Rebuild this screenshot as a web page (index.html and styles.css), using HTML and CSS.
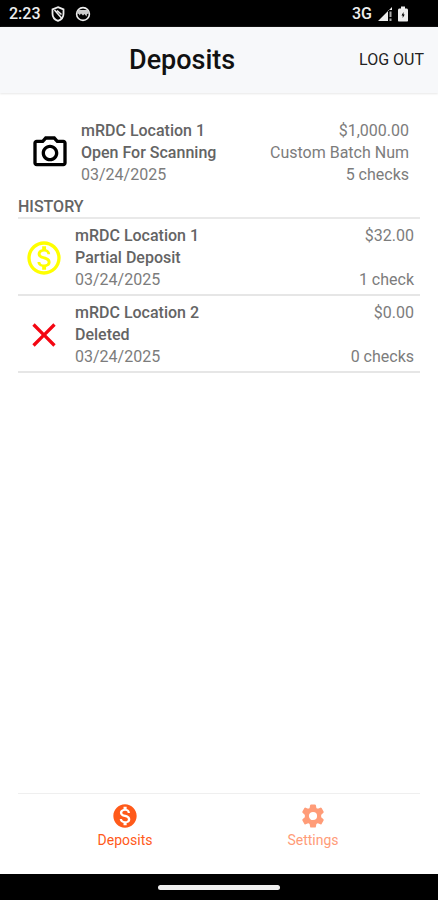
FILE: index.html
```html
<!DOCTYPE html>
<html lang="en">
<head>
<meta charset="utf-8">
<meta name="viewport" content="width=device-width, initial-scale=1">
<title>Deposits</title>
<link rel="stylesheet" href="styles.css">
</head>
<body>
<div class="status">
  <div class="status-group">
    <span class="status-text">2:23</span>
    <svg class="status-icon" viewBox="0 0 16 16" aria-hidden="true"><path d="M8 1.2 13.500 3.300v4.400c0 3.400-2.100 5.900-5.500 7.200-3.400-1.300-5.500-3.800-5.500-7.200V3.300z" fill="none" stroke="#eee" stroke-width="1.800"/><path d="M4.500 4 11.500 12M7 4.500l4.500 4" stroke="#eee" stroke-width="1.600"/></svg>
    <svg class="status-icon" viewBox="0 0 16 16" aria-hidden="true"><circle cx="8" cy="8" r="6.400" fill="none" stroke="#eee" stroke-width="1.600"/><path d="M3 4h10l1 3.500-2 .5-.5 2.500L9.500 8 8 9.500 6 7.500 4.500 9.500 4 8 2 7.500z" fill="#ccc"/></svg>
  </div>
  <div class="status-group status-right">
    <span class="status-text">3G</span>
    <svg class="status-icon" viewBox="0 0 16 16" aria-hidden="true"><path d="M1 15 15 1v3h-4v11z" fill="#eee"/><path d="M12.500 5.500h2V11h-2zM12.500 12.500h2V15h-2z" fill="#aaa"/></svg>
    <svg class="status-battery" viewBox="0 0 10 16" aria-hidden="true"><path d="M3 .5h4v2h1.500c.8 0 1.500.7 1.500 1.500v10.500c0 .6-.4 1-1 1H1c-.6 0-1-.4-1-1V4c0-.8.7-1.500 1.500-1.500H3z" fill="#eee"/><path d="M5.500 6 3.500 9.500h1.200V12l2-3.500H5.500z" fill="#000"/></svg>
  </div>
</div>

<header class="header">
  <h1 class="title">Deposits</h1>
  <button class="logout" type="button">LOG OUT</button>
</header>

<main class="content">
  <article class="item item-open">
    <svg class="item-icon" viewBox="0 0 24 24" fill="#000" aria-hidden="true"><path d="M14.120 4l1.830 2H20v12H4V6h4.050l1.830-2h4.240M15 2H9L7.170 4H4c-1.100 0-2 .9-2 2v12c0 1.100.9 2 2 2h16c1.100 0 2-.9 2-2V6c0-1.100-.9-2-2-2h-3.170L15 2zm-3 7c1.650 0 3 1.350 3 3s-1.350 3-3 3-3-1.350-3-3 1.350-3 3-3m0-2c-2.760 0-5 2.240-5 5s2.240 5 5 5 5-2.240 5-5-2.240-5-5-5z"/></svg>
    <div class="item-main">
      <div class="strong">mRDC Location 1</div>
      <div class="strong">Open For Scanning</div>
      <div>03/24/2025</div>
    </div>
    <div class="item-side">
      <div>$1,000.00</div>
      <div>Custom Batch Num</div>
      <div>5 checks</div>
    </div>
  </article>

  <h2 class="section">HISTORY</h2>

  <article class="item">
    <svg class="item-icon" viewBox="0 0 24 24" fill="#ff0" aria-hidden="true"><path d="M12 2C6.480 2 2 6.480 2 12s4.480 10 10 10 10-4.480 10-10S17.520 2 12 2zm0 18c-4.410 0-8-3.590-8-8s3.590-8 8-8 8 3.590 8 8-3.590 8-8 8zm.31-8.860c-1.770-.45-2.340-.94-2.340-1.670 0-.84.79-1.430 2.100-1.430 1.380 0 1.900.66 1.940 1.640h1.710c-.05-1.340-.87-2.570-2.490-2.970V5H10.900v1.690c-1.510.32-2.720 1.300-2.720 2.810 0 1.790 1.490 2.690 3.660 3.210 1.950.46 2.340 1.150 2.340 1.870 0 .53-.39 1.390-2.100 1.390-1.600 0-2.230-.72-2.320-1.640H8.040c.1 1.700 1.360 2.660 2.860 2.970V19h2.340v-1.670c1.520-.29 2.720-1.160 2.730-2.770-.01-2.200-1.900-2.960-3.660-3.420z"/></svg>
    <div class="item-main">
      <div class="strong">mRDC Location 1</div>
      <div class="strong">Partial Deposit</div>
      <div>03/24/2025</div>
    </div>
    <div class="item-side">
      <div>$32.00</div>
      <div>1 check</div>
    </div>
  </article>

  <article class="item">
    <svg class="item-icon" viewBox="0 0 24 24" fill="#f40612" aria-hidden="true"><path d="M19 6.410 17.590 5 12 10.590 6.410 5 5 6.410 10.590 12 5 17.590 6.410 19 12 13.410 17.590 19 19 17.590 13.410 12z"/></svg>
    <div class="item-main">
      <div class="strong">mRDC Location 2</div>
      <div class="strong">Deleted</div>
      <div>03/24/2025</div>
    </div>
    <div class="item-side">
      <div>$0.00</div>
      <div>0 checks</div>
    </div>
  </article>
</main>

<nav class="tabs" aria-label="Main">
  <a class="tab" href="#deposits" aria-current="page">
    <svg class="tab-icon" viewBox="0 0 24 24" aria-hidden="true"><path d="M12 2C6.480 2 2 6.480 2 12s4.480 10 10 10 10-4.480 10-10S17.520 2 12 2zm1.410 16.090V20h-2.670v-1.930c-1.710-.36-3.160-1.460-3.270-3.400h1.960c.1 1.050.82 1.870 2.650 1.870 1.960 0 2.400-.98 2.400-1.590 0-.83-.44-1.610-2.670-2.140-2.480-.6-4.180-1.620-4.180-3.670 0-1.720 1.390-2.840 3.110-3.210V4h2.670v1.950c1.860.45 2.790 1.860 2.850 3.390H14.300c-.05-1.110-.64-1.870-2.220-1.870-1.500 0-2.400.68-2.400 1.640 0 .84.65 1.390 2.670 1.910s4.180 1.390 4.180 3.910c-.01 1.830-1.380 2.830-3.120 3.160z"/></svg>
    <span>Deposits</span>
  </a>
  <a class="tab tab-idle" href="#settings">
    <svg class="tab-icon" viewBox="0 0 24 24" aria-hidden="true"><path fill-rule="evenodd" stroke-width="1.800" stroke-linejoin="round" stroke="currentColor" d="M10.400 3h3.200l.5 2.800 1.800 1 2.700-1.100 1.700 2.900-2.200 2v2.800l2.200 2-1.700 2.900-2.700-1.100-1.800 1-.5 2.800h-3.200l-.5-2.800-1.800-1-2.700 1.100-1.700-2.900 2.200-2v-2.800l-2.200-2 1.700-2.900 2.700 1.100 1.800-1zM12 7.600a4.400 4.400 0 1 0 0 8.800 4.400 4.400 0 0 0 0-8.800z"/></svg>
    <span>Settings</span>
  </a>
</nav>

<div class="gesture"><div class="gesture-pill"></div></div>
</body>
</html>
```

FILE: styles.css
```css
* {
  box-sizing: border-box;
}

body {
  margin: 0;
  min-height: 100vh;
  display: flex;
  flex-direction: column;
  background: #fff;
  color: #7c7c7c;
  font-family: Roboto, "Liberation Sans", sans-serif;
  font-size: 16px;
  line-height: 22px;
}

.status {
  display: flex;
  justify-content: space-between;
  height: 27px;
  padding: 0 30px 0 9px;
  background: #000;
  color: #eee;
}

.status-group {
  display: flex;
  align-items: center;
  gap: 9px;
}

.status-right {
  gap: 5px;
}

.status-text {
  font-weight: 500;
}

.status-icon {
  width: 16px;
  height: 16px;
}

.status-battery {
  width: 10px;
  height: 16px;
}

.header {
  display: grid;
  grid-template-columns: 1fr auto;
  align-items: center;
  height: 66px;
  padding: 0 14px 0 129px;
  background: #f7f8fa;
  box-shadow: 0 1px 2px #e8e8e8;
}

.title {
  margin: 0;
  color: #111;
  font-size: 27px;
  font-weight: 500;
  line-height: 32px;
}

.logout {
  padding: 0;
  border: 0;
  background: none;
  color: #222;
  font: inherit;
}

.content {
  flex: 1;
  padding: 27px 18px 0;
}

.item {
  display: flex;
  padding: 6px 6px 3px;
  border-bottom: 2px solid #e6e6e6;
}

.item-open {
  padding: 0 11px 10px 12px;
  border-bottom: 0;
}

.item-icon {
  flex: none;
  align-self: center;
  width: 40px;
  height: 40px;
  margin-right: 11px;
}

.item-main {
  flex: 1;
}

.item-side {
  display: flex;
  flex-direction: column;
  justify-content: space-between;
  text-align: right;
}

.strong {
  color: #646464;
  font-weight: 500;
}

.section {
  margin: 0;
  border-bottom: 2px solid #e9e9e9;
  color: #646464;
  font-size: 16px;
  font-weight: 500;
  line-height: 21px;
}

.tabs {
  display: grid;
  grid-template-columns: 1fr 1fr;
  height: 81px;
  margin: 0 18px;
  padding: 8px 13px 0;
  border-top: 1px solid #efefef;
}

.tab {
  display: flex;
  flex-direction: column;
  align-items: center;
  color: #ff5a1a;
  font-size: 14px;
  line-height: 20px;
  text-decoration: none;
}

.tab-idle {
  color: #ff9c78;
}

.tab-icon {
  width: 28px;
  height: 28px;
  fill: currentColor;
}

.gesture {
  display: flex;
  align-items: center;
  justify-content: center;
  height: 26px;
  background: #000;
}

.gesture-pill {
  width: 122px;
  height: 5px;
  border-radius: 3px;
  background: #eee;
}
```
